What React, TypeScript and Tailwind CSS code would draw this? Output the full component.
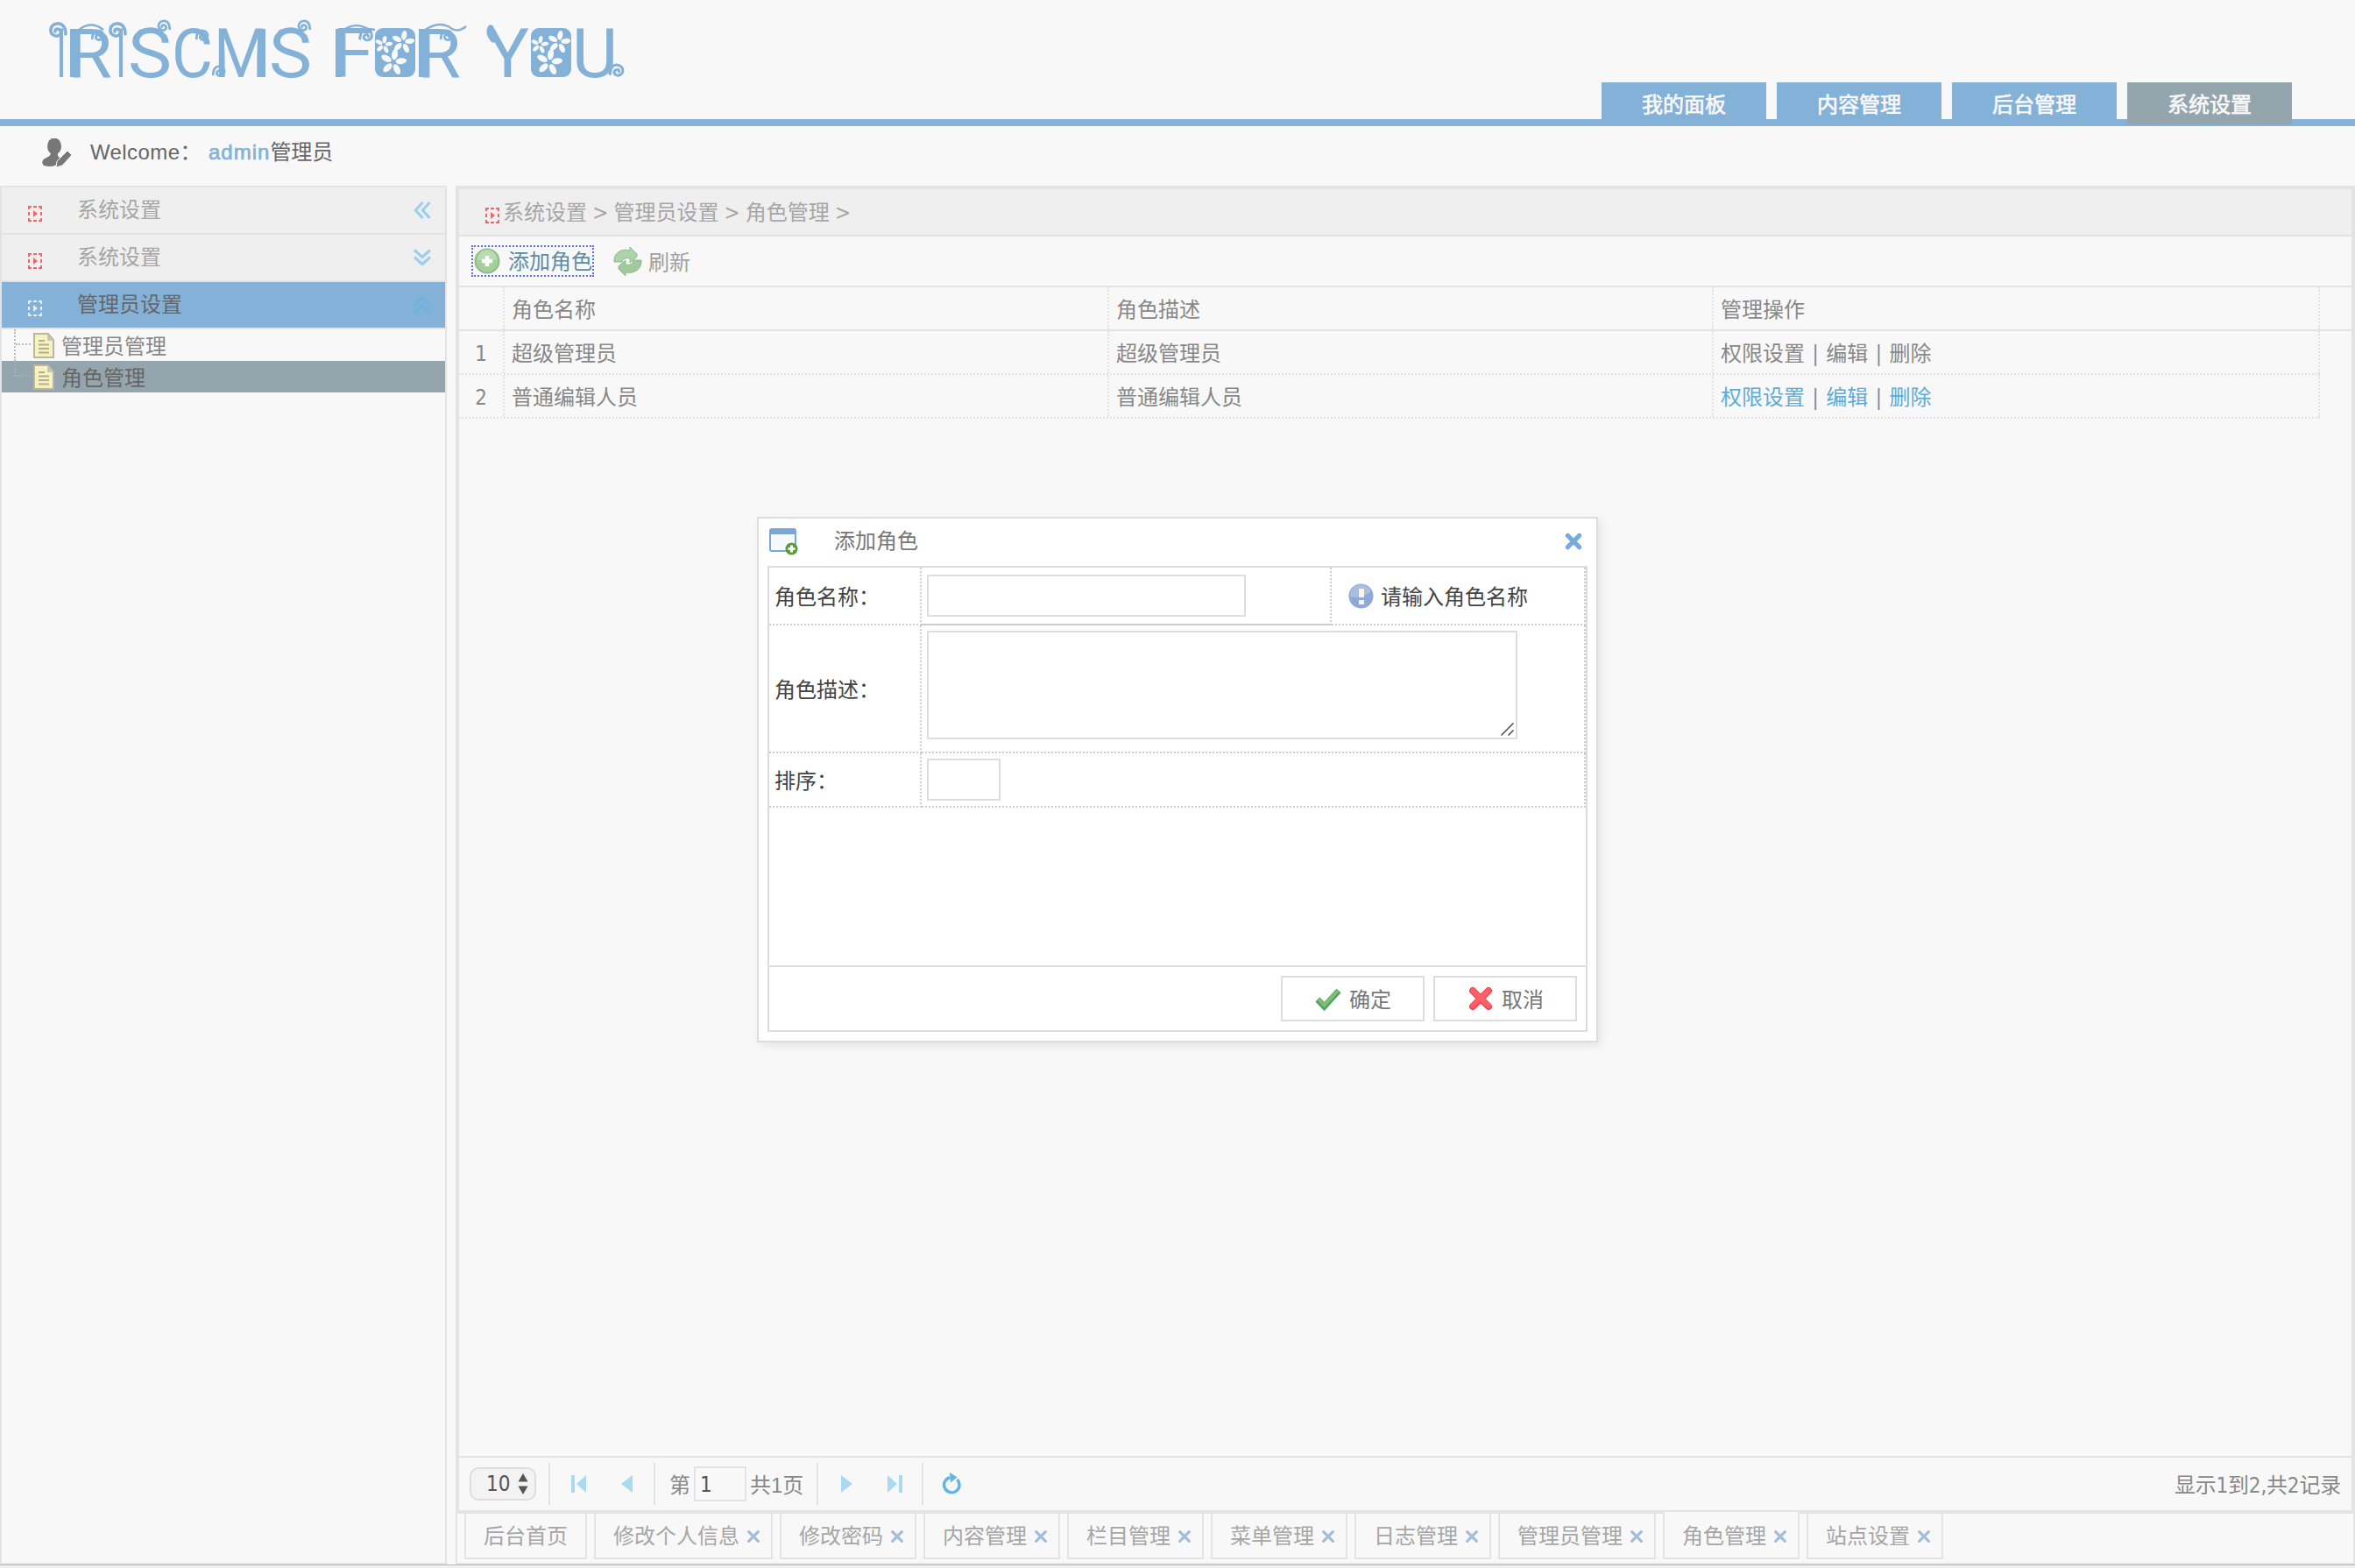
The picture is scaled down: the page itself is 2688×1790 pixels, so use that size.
import React from "react";

const BLUE = "#83b1d8";

/* ---------- logo ---------- */

const letters: { c: string; x: number; w: number }[] = [
  { c: "I", x: 64, w: 12 },
  { c: "R", x: 77, w: 51 },
  { c: "I", x: 132, w: 12 },
  { c: "S", x: 146, w: 50 },
  { c: "C", x: 196, w: 47 },
  { c: "M", x: 244, w: 62 },
  { c: "S", x: 307, w: 49 },
  { c: "F", x: 379, w: 48 },
  { c: "R", x: 476, w: 50 },
  { c: "Y", x: 555, w: 49 },
  { c: "U", x: 653, w: 52 },
];

/* thick stems that weigh one side of a letter */
const stems = [83, 299, 386, 481];

function Curl({ x, y, flip = false, s = 1 }: { x: number; y: number; flip?: boolean; s?: number }) {
  return (
    <g transform={`translate(${x} ${y}) scale(${flip ? -s : s} ${s})`}>
      <path d="M9 4C9-5 4-9-1-8C-9-7-10 2-5 5C0 8 5 4 3 0C1-3-4-2-3 1" fill="none" stroke={BLUE} strokeWidth="3.6" strokeLinecap="round" />
    </g>
  );
}

function Flower({ x, y, r }: { x: number; y: number; r: number }) {
  return (
    <g transform={`translate(${x} ${y})`}>
      {[0, 72, 144, 216, 288].map((a) => (
        <ellipse key={a} cx="0" cy={-r * 0.6} rx={r * 0.23} ry={r * 0.42} fill="#f8f8f8" transform={`rotate(${a + 10})`} />
      ))}
    </g>
  );
}

function Tile({ x }: { x: number }) {
  return (
    <g transform={`translate(${x} 32)`}>
      <rect width="46" height="56" rx="9" fill={BLUE} />
      <Flower x={10} y={19} r={10} />
      <Flower x={32} y={16} r={13} />
      <Flower x={21} y={39} r={15} />
    </g>
  );
}

function Logo() {
  return (
    <svg width="740" height="100" viewBox="0 0 740 100" className="shrink-0">
      <g fill={BLUE} fontFamily="Roboto, sans-serif" fontWeight="400" fontSize="77">
        {letters.map((l, i) => (
          <text key={i} x={l.x} y="88" textLength={l.w} lengthAdjust="spacingAndGlyphs">
            {l.c}
          </text>
        ))}
      </g>
      {stems.map((x) => (
        <rect key={x} x={x - 3} y="33" width="7" height="55" fill={BLUE} />
      ))}
      <Curl x={66} y={35} />
      <Curl x={134} y={35} />
      <Curl x={187} y={30} s={0.75} />
      <Curl x={347} y={30} s={0.75} />
      <Curl x={112} y={41} s={0.75} flip />
      <Curl x={231} y={41} s={0.75} flip />
      <Curl x={418} y={41} s={0.8} flip />
      <Curl x={510} y={41} s={0.75} flip />
      <Curl x={250} y={82} s={0.75} flip />
      <Curl x={704} y={81} s={0.85} flip />
      <g fill="none" stroke={BLUE} strokeWidth="2.400">
        <path d="M158 36Q173 29 183 36" />
        <path d="M318 36Q333 29 343 36" />
        <path d="M390 36Q404 24 420 33L428 34" />
        <path d="M484 35Q502 22 516 33Q524 37 532 30" />
        <path d="M90 34Q104 23 118 34" />
      </g>
      <path d="M563 45Q557 38 560 32" fill="none" stroke={BLUE} strokeWidth="7" strokeLinecap="round" />
      <Tile x={428} />
      <Tile x={606} />
    </svg>
  );
}

/* ---------- icons ---------- */

function UserIcon() {
  return (
    <svg width="34" height="34" viewBox="0 0 34 34">
      <ellipse cx="14" cy="9" rx="8" ry="9.5" fill="#777" />
      <path d="M10 15h8v5l3 3-6 8q-6 2-13 0c-3-3-2-7 3-9 4-2 5-3 5-7z" fill="#777" />
      <path d="M29 14l5 5-11 12-7 2 1-7z" fill="#777" stroke="#f8f8f8" strokeWidth="1" />
    </svg>
  );
}

function Marker({ color }: { color: string }) {
  return (
    <svg width="16" height="18" viewBox="0 0 16 18">
      <path d="M0 1h4M6 1h4M12 1h4M0 17h4M6 17h4M12 17h4" stroke={color} strokeWidth="2" />
      <path d="M1 0v4M1 7v4M1 14v4M15 0v4M15 7v4M15 14v4" stroke={color} strokeWidth="2" />
      <path d="M6 5l5 4-5 4z" fill={color} />
    </svg>
  );
}

function Chevrons({ dir, color }: { dir: "left" | "down" | "up"; color: string }) {
  const rot = dir === "left" ? 90 : dir === "down" ? 0 : 180;
  return (
    <svg width="22" height="22" viewBox="0 0 22 22">
      <g transform={`rotate(${rot} 11 11)`} fill="none" stroke={color} strokeWidth="3.200">
        <path d="M2 2.500L11 10.500L20 2.500" />
        <path d="M2 10.500L11 18.500L20 10.500" />
      </g>
    </svg>
  );
}

function FileIcon() {
  return (
    <svg width="24" height="29" viewBox="0 0 24 29">
      <path d="M1 1h16l6 7v20H1z" fill="#f7f3c0" stroke="#b9b6a4" strokeWidth="2" />
      <path d="M16 1v8h7z" fill="#c9c6b4" />
      <path d="M6 9h7M6 13.500h12M6 18h12M6 22.500h12" stroke="#b3b08e" strokeWidth="2" />
    </svg>
  );
}

function PlusIcon() {
  return (
    <svg width="30" height="30" viewBox="0 0 30 30">
      <circle cx="15" cy="15" r="13.500" fill="#a5cf9d" stroke="#8fba8a" strokeWidth="2" />
      <path d="M4 13a11 11 0 0 1 22 0q-11 5-22 0z" fill="#b9dbb2" />
      <path d="M15 9v12M9 15h12" stroke="#fbfdfb" strokeWidth="4.500" />
    </svg>
  );
}

function RefreshIcon() {
  return (
    <svg width="33" height="33" viewBox="0 0 33 33">
      <path d="M1 17C0 7 9 1 19 4l0-4 8 8 0 3-8 7v-5c-5-1-8 0-9 4z" fill="#acd3aa" stroke="#8fba8d" />
      <path d="M32 15c1 10-8 16-18 14v4l-8-8 0-3 8-7v5c5 1 8 0 9-5z" fill="#9fca9d" stroke="#8fba8d" />
    </svg>
  );
}

function WindowIcon() {
  return (
    <svg width="33" height="32" viewBox="0 0 33 32">
      <rect x="1" y="2" width="29" height="25" rx="2" fill="#f5f8fc" stroke="#79a7da" strokeWidth="2" />
      <path d="M1 3h29v5H1z" fill="#79a7da" />
      <circle cx="25.500" cy="24.500" r="7" fill="#5c9a3c" />
      <path d="M25.500 20.500v8M21.500 24.500h8" stroke="#fff" strokeWidth="3" />
    </svg>
  );
}

function Cross({ size, color, w }: { size: number; color: string; w: number }) {
  return (
    <svg width={size} height={size} viewBox="0 0 18 18">
      <path d="M3 3l12 12M15 3L3 15" stroke={color} strokeWidth={w} strokeLinecap="round" />
    </svg>
  );
}

function InfoIcon() {
  return (
    <svg width="29" height="29" viewBox="0 0 29 29">
      <circle cx="14.500" cy="14.500" r="14" fill="#8fa9d6" />
      <path d="M2 15A12.500 12.500 0 0 1 26 9Q16 18 2 15z" fill="#a9bfe0" />
      <path d="M12 6h6v10h-6zM12 19h6v5h-6z" fill="#fbf3ec" />
    </svg>
  );
}

function CheckIcon() {
  return (
    <svg width="32" height="27" viewBox="0 0 32 27">
      <path d="M4 14l7.500 8L28 4" fill="none" stroke="#56a15a" strokeWidth="7" />
      <path d="M4.500 13l7 7.500L27 4" fill="none" stroke="#79bf78" strokeWidth="4" />
    </svg>
  );
}

function CancelIcon() {
  return (
    <svg width="28" height="28" viewBox="0 0 28 28">
      <path d="M5 5l18 18M23 5L5 23" stroke="#f2454f" strokeWidth="8" strokeLinecap="round" />
      <path d="M5 5l18 17M23 5L5 22" stroke="#fb6068" strokeWidth="5.500" strokeLinecap="round" />
    </svg>
  );
}

/* ---------- header ---------- */

function Header() {
  const tabs = ["我的面板", "内容管理", "后台管理", "系统设置"];
  return (
    <header className="flex h-[144px] shrink-0 justify-between border-b-8 border-[#83b1d8]">
      <Logo />
      <nav className="flex h-[136px] gap-3 pt-[94px] pr-[72px]">
        {tabs.map((t, i) => (
          <a
            key={t}
            className={`flex h-[48px] w-[188px] items-center justify-center pt-[3px] text-2xl leading-[24px] text-[#f8f8f8] [-webkit-text-stroke:0.7px_#f8f8f8] ${
              i === 3 ? "bg-[#95a5ad]" : "bg-[#83b1d8]"
            }`}
          >
            {t}
          </a>
        ))}
      </nav>
    </header>
  );
}

function UserBar() {
  return (
    <div className="flex h-[68px] shrink-0 items-center pb-[8px] pl-[48px] text-2xl leading-[24px] text-[#666]">
      <span className="pt-[2px]">
        <UserIcon />
      </span>
      <span className="ml-[21px] w-[135px] tracking-[0.4px] whitespace-nowrap">Welcome：</span>
      <span className="tracking-[1px] text-[#83b1d8] [-webkit-text-stroke:0.7px_#83b1d8]">admin</span>
      <span>管理员</span>
    </div>
  );
}

/* ---------- sidebar ---------- */

function SideHead({ label, dir, active = false }: { label: string; dir: "left" | "down" | "up"; active?: boolean }) {
  return (
    <div className={`flex h-[54px] items-center border-b-2 border-[#e3e3e3] pr-[15px] pl-[30px] ${active ? "bg-[#83b1d8] bg-clip-padding text-[#666]" : "bg-[#efefef] text-[#a6a6a6]"}`}>
      <span className="pt-[8px]">
        <Marker color={active ? "#e6eff8" : "#e8696d"} />
      </span>
      <span className="ml-[40px] flex-1">{label}</span>
      <Chevrons dir={dir} color={active ? "#6eb2de" : "#9bd0ec"} />
    </div>
  );
}

function TreeRow({ label, active = false }: { label: string; active?: boolean }) {
  return (
    <div className={`flex h-[36px] pl-[14px] ${active ? "bg-[#95a5ad] text-[#666]" : "text-[#888]"}`}>
      <div className={`w-[22px] border-l-2 border-dotted ${active ? "h-[18px] border-[#a5aeb3]" : "h-[36px] border-[#bdbdbd]"}`}>
        <div className={`h-[18px] w-[17px] border-b-2 border-dotted ${active ? "border-[#a5aeb3]" : "border-[#bdbdbd]"}`} />
      </div>
      <span className="pt-[4px]">
        <FileIcon />
      </span>
      <span className="ml-[8px] leading-[40px]">{label}</span>
    </div>
  );
}

function Sidebar() {
  return (
    <aside className="w-[510px] shrink-0 border-2 border-[#e3e3e3] text-2xl">
      <SideHead label="系统设置" dir="left" />
      <SideHead label="系统设置" dir="down" />
      <SideHead label="管理员设置" dir="up" active />
      <TreeRow label="管理员管理" />
      <TreeRow label="角色管理" active />
    </aside>
  );
}

/* ---------- main panel ---------- */

function Cell({ children }: { children?: React.ReactNode }) {
  return (
    <div className="flex h-full w-[690px] items-center border-r-2 border-dotted border-[#e3e3e3] pt-[3px] pl-[8px] last:w-[692px]">
      {children}
    </div>
  );
}

function Row({ n, cells, head = false }: { n: string; cells: React.ReactNode[]; head?: boolean }) {
  return (
    <div className={`flex h-[50px] border-b-2 border-[#e3e3e3] ${head ? "" : "w-[2124px] border-dotted"}`}>
      <div className="flex h-full w-[52px] items-center justify-center border-r-2 border-dotted border-[#e3e3e3] pt-[3px]">{n}</div>
      {cells.map((c, i) => (
        <Cell key={i}>{c}</Cell>
      ))}
    </div>
  );
}

function Ops({ link = false }: { link?: boolean }) {
  const c = link ? "text-[#5cacd8]" : "";
  return (
    <span className="[word-spacing:1.6px] whitespace-pre">
      <span className={c}>权限设置</span> | <span className={c}>编辑</span> | <span className={c}>删除</span>
    </span>
  );
}

function Sep() {
  return <div className="h-[48px] w-[2px] shrink-0 bg-[#e3e3e3]" />;
}

function Pager() {
  return (
    <div className="flex h-[62px] items-center border-t-2 border-[#e3e3e3] px-[12px]">
      <div className="flex h-[38px] w-[76px] items-center rounded-[10px] border-2 border-[#dedede] bg-[#f3f3f3] pl-[17px] text-[#555]">
        <span className="w-[36px]">10</span>
        <svg width="12" height="24" viewBox="0 0 12 24">
          <path d="M6 0l5.500 9.500H.5zM6 24l5.500-9.500H.5z" fill="#555" />
        </svg>
      </div>
      <div className="ml-[14px]"><Sep /></div>
      <svg className="ml-[24px]" width="17" height="20" viewBox="0 0 17 20"><path d="M0 0h4v20H0zM17 0v20L6 10z" fill="#a9daf1" /></svg>
      <svg className="ml-[40px]" width="13" height="20" viewBox="0 0 13 20"><path d="M13 0v20L0 10z" fill="#a9daf1" /></svg>
      <div className="ml-[24px]"><Sep /></div>
      <span className="ml-[16px] pt-[3px]">第</span>
      <div className="ml-[4px] flex h-[40px] w-[60px] items-center border-2 border-[#e3e3e3] pt-[2px] pl-[5px] text-[#555]">1</div>
      <span className="ml-[4px] w-[62px] pt-[3px] whitespace-nowrap [font-family:'Liberation_Sans','Noto_Sans_CJK_SC',sans-serif]">共1页</span>
      <div className="ml-[14px]"><Sep /></div>
      <svg className="ml-[26px]" width="13" height="20" viewBox="0 0 13 20"><path d="M0 0v20L13 10z" fill="#a9daf1" /></svg>
      <svg className="ml-[40px]" width="17" height="20" viewBox="0 0 17 20"><path d="M13 0h4v20h-4zM0 0v20L11 10z" fill="#a9daf1" /></svg>
      <div className="ml-[22px]"><Sep /></div>
      <svg className="mb-[2px] ml-[21px]" width="22" height="26" viewBox="0 0 22 26">
        <path d="M17.500 9A8.700 8.700 0 1 1 9.500 6.600" fill="none" stroke="#5fb6e4" strokeWidth="3.400" />
        <path d="M9 1l8.500 5.500L10 12.500z" fill="#5fb6e4" />
      </svg>
      <span className="ml-auto pt-[3px] tracking-[-0.2px]">显示1到2,共2记录</span>
    </div>
  );
}

function MainPanel() {
  return (
    <section className="flex h-[1516px] flex-col border-4 border-[#e3e3e3] text-2xl leading-[24px] text-[#888] [font-family:'DejaVu_Sans','Noto_Sans_CJK_SC',sans-serif] [font-stretch:condensed]">
      <div className="flex h-[54px] items-center border-b-2 border-[#e3e3e3] bg-[#efefef] pl-[30px] text-[#a6a6a6]">
        <span className="pt-[8px]">
          <Marker color="#e8696d" />
        </span>
        <span className="ml-[4px] pt-px [word-spacing:-0.700px]">系统设置 &gt; 管理员设置 &gt; 角色管理 &gt;</span>
      </div>
      <div className="flex h-[58px] items-center border-b-2 border-[#e3e3e3] pl-[14px]">
        <button className="flex h-[36px] w-[140px] items-center border-2 border-dotted border-[#5d6cf0] pl-px text-[#5e8ca4]">
          <PlusIcon />
          <span className="ml-[9px] pt-[2px] whitespace-nowrap">添加角色</span>
        </button>
        <span className="ml-[22px]">
          <RefreshIcon />
        </span>
        <span className="ml-[7px] pt-[3px] text-[#a0a0a0]">刷新</span>
      </div>
      <Row n="" head cells={["角色名称", "角色描述", "管理操作"]} />
      <Row n="1" cells={["超级管理员", "超级管理员", <Ops />]} />
      <Row n="2" cells={["普通编辑人员", "普通编辑人员", <Ops link />]} />
      <div className="flex-1" />
      <Pager />
    </section>
  );
}

function BottomTabs() {
  const tabs = ["后台首页", "修改个人信息", "修改密码", "内容管理", "栏目管理", "菜单管理", "日志管理", "管理员管理", "角色管理", "站点设置"];
  return (
    <div className="flex h-[58px] gap-2 border-x-2 border-b-2 border-[#e3e3e3] pl-[8px] text-2xl leading-[24px] text-[#a6a6a6]">
      {tabs.map((t, i) => (
        <div
          key={t}
          className={`flex items-center border-x-2 border-b-2 border-[#e3e3e3] pl-[20px] ${
            t === "角色管理" ? "-mt-[2px] h-[54px] bg-[#f8f8f8] pt-[2px]" : "h-[52px]"
          } ${i === 0 ? "pr-[20px]" : "pr-[12px]"}`}
        >
          <span className="pt-[2px]">{t}</span>
          {i > 0 && (
            <span className="ml-[8px] pt-[2px]">
              <Cross size={16} color="#a3bcd8" w={3.6} />
            </span>
          )}
        </div>
      ))}
    </div>
  );
}

/* ---------- dialog ---------- */

function Dialog() {
  return (
    <div className="absolute top-[590px] left-[864px] flex h-[600px] w-[960px] flex-col border-2 border-[#ddd] bg-white px-[10px] pb-[10px] text-2xl leading-[24px] text-[#444] shadow-[4px_4px_10px_rgba(0,0,0,0.08)]">
      <div className="flex h-[54px] items-center pr-[6px] pb-[2px] pl-[2px] text-[#777]">
        <WindowIcon />
        <span className="ml-[41px] flex-1">添加角色</span>
        <Cross size={20} color={"#76a9dc"} w={4.6} />
      </div>
      <div className="flex flex-1 flex-col border-2 border-[#ddd]">
        <div className="w-[932px]">
          <div className="flex h-[66px]">
            <div className="flex w-[174px] items-center border-r-2 border-b-2 border-dotted border-[#ccc] pt-[3px] pl-[6px]">角色名称：</div>
            <div className="w-[468px] border-r-2 border-b-2 border-[#ccc] [border-right-style:dotted]">
              <div className="mt-2 ml-[6px] h-[48px] w-[364px] border-2 border-[#ddd]" />
            </div>
            <div className="flex flex-1 items-center border-r-2 border-b-2 border-dotted border-[#ccc] pl-[19px]">
              <InfoIcon />
              <span className="ml-[8px] pt-[3px]">请输入角色名称</span>
            </div>
          </div>
          <div className="flex h-[146px]">
            <div className="flex w-[174px] items-center border-r-2 border-b-2 border-dotted border-[#ccc] pt-[3px] pl-[6px]">角色描述：</div>
            <div className="flex-1 border-r-2 border-b-2 border-dotted border-[#ccc]">
              <div className="mt-[6px] ml-[6px] flex h-[124px] w-[674px] items-end justify-end border-2 border-[#ddd]">
                <svg width="18" height="18" viewBox="0 0 18 18">
                  <path d="M1.500 15.500L15.500 1.500M9.500 15.500L15.500 9.500" stroke="#555" strokeWidth="1.600" />
                </svg>
              </div>
            </div>
          </div>
          <div className="flex h-[62px]">
            <div className="flex w-[174px] items-center border-r-2 border-b-2 border-dotted border-[#ccc] pt-[3px] pl-[6px]">排序：</div>
            <div className="flex-1 border-r-2 border-b-2 border-dotted border-[#ccc]">
              <div className="mt-[6px] ml-[6px] h-[48px] w-[84px] border-2 border-[#ddd]" />
            </div>
          </div>
        </div>
        <div className="mt-auto flex h-[74px] justify-end gap-[10px] border-t-2 border-[#ddd] pt-[10px] pr-[10px] text-[#777]">
          <button className="flex h-[52px] w-[164px] items-center border-2 border-[#ddd] pl-[36px]">
            <CheckIcon />
            <span className="ml-[8px] pt-[3px]">确定</span>
          </button>
          <button className="flex h-[52px] w-[164px] items-center border-2 border-[#ddd] pl-[38px]">
            <CancelIcon />
            <span className="ml-[10px] pt-[3px]">取消</span>
          </button>
        </div>
      </div>
    </div>
  );
}

export default function App() {
  return (
    <div className="relative flex h-[1790px] w-[2688px] flex-col overflow-hidden bg-[#f8f8f8] [font-family:'Liberation_Sans','Noto_Sans_CJK_SC',sans-serif]">
      <Header />
      <UserBar />
      <main className="flex h-[1574px] shrink-0 gap-[10px]">
        <Sidebar />
        <div className="flex flex-1 flex-col">
          <MainPanel />
          <BottomTabs />
        </div>
      </main>
      <div className="h-[4px] border-t border-[#b5b5b5] bg-[#f1f1f1]" />
      <Dialog />
    </div>
  );
}
